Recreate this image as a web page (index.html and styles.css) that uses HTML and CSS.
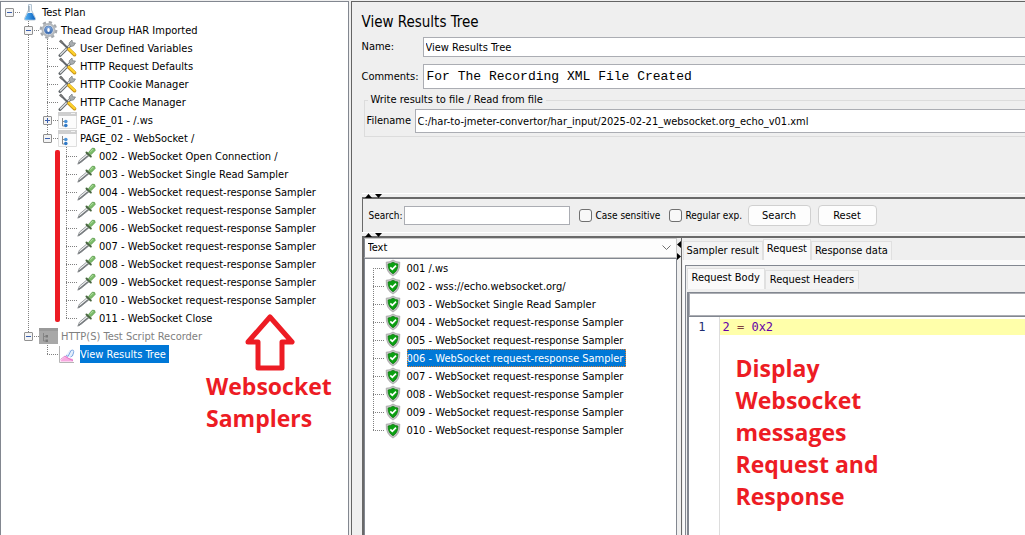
FILE: index.html
```html
<!DOCTYPE html>
<html lang="en">
<head>
<meta charset="utf-8">
<title>View Results Tree</title>
<link rel="stylesheet" href="styles.css">
</head>
<body>
<svg class="defs" aria-hidden="true">
  <defs>
    <linearGradient id="blue" x1="0" y1="0" x2="0" y2="1"><stop offset="0" stop-color="#8db4e8"/><stop offset="1" stop-color="#2c5ea8"/></linearGradient>
    <linearGradient id="water" x1="0" y1="0" x2="1" y2="0"><stop offset="0" stop-color="#58b4f4"/><stop offset="1" stop-color="#0a62c0"/></linearGradient>
    <symbol id="flask" viewBox="0 0 19 18">
      <path d="M8.300 1.500h3.400M8.500 2v5L4.500 15.500q-.5 1.500 1 1.500h9q1.500 0 1-1.500L11.500 7V2" fill="#eef5fb" stroke="#b4c4d2"/>
      <path d="M7.800 10h4.400l3 5.800q0 1-1 1H5.800q-1 0-1-1z" fill="url(#water)"/>
      <path d="M9 3v6" stroke="#7b8c9b"/>
    </symbol>
    <symbol id="gear" viewBox="0 0 19 18">
      <circle cx="9.500" cy="9" r="7.700" fill="none" stroke="#a3a7ac" stroke-width="2.400" stroke-dasharray="3.200 2.850"/>
      <circle cx="9.500" cy="9" r="6" fill="#e6e8ea" stroke="#b4b8bc" stroke-width="2"/>
      <circle cx="9.500" cy="9" r="4" fill="url(#blue)" stroke="#5f86bd"/>
      <ellipse cx="9.500" cy="9" rx="1.300" ry="2" fill="#fff"/>
    </symbol>
    <symbol id="tools" viewBox="0 0 19 18">
      <path d="M2 16.500L13 5.500" stroke="#62676b" stroke-width="3" stroke-linecap="round"/>
      <path d="M2.500 15.800L13 5.300" stroke="#dfe2e3" stroke-width="1.300" stroke-linecap="round"/>
      <path d="M12.500 7.500L11 4l3-3 .5 2.700L17.500 4l-2 3z" fill="#a8adb0" stroke="#777c80" stroke-width=".7"/>
      <path d="M2 1.500L10 9.500" stroke="#62676b" stroke-width="2"/><path d="M1 2.500L3 .8l2.500 2.500-2 1.500z" fill="#777"/>
      <path d="M11 10.500L16.500 15.700" stroke="#c9951a" stroke-width="3.600" stroke-linecap="round"/>
      <path d="M11 10L16.500 15.200" stroke="#ffd32c" stroke-width="2.200" stroke-linecap="round"/>
    </symbol>
    <symbol id="controller" viewBox="0 0 19 18">
      <path d="M.5 2.500h18v15H.5z" fill="#fcfcfc" stroke="#dedede"/><path d="M0 1h19v4H0z" fill="#cfcfcf"/>
      <path d="M13 2.500h4" stroke="#f2f2f2"/><path d="M4.500 7v8h2M4.500 10.500h2" fill="none" stroke="#8a8a8a"/>
      <circle cx="7.800" cy="10.500" r="1.800" fill="#4a93d9"/><circle cx="7.800" cy="14.500" r="1.800" fill="#2f79c7"/>
    </symbol>
    <symbol id="recorder" viewBox="0 0 19 18">
      <path d="M0 1h19v16H0z" fill="#a8a8a8"/><path d="M0 1h19v3H0z" fill="#9a9a9a"/>
      <path d="M4.500 6v8h2M4.500 9.500h2" fill="none" stroke="#858585"/><path d="M6.500 8h2.500v2.500H6.500zM6.500 12.500h2.500v2.500H6.500z" fill="#7a7a7a"/>
    </symbol>
    <symbol id="dropper" viewBox="0 0 19 18">
      <path d="M.8 17.200L2.500 13 10 6.800l2 2L4.500 15z" fill="#f0f1f2" stroke="#8e9295" stroke-width=".9"/>
      <path d="M1.500 16.500L4 14.500 11 8.800" fill="none" stroke="#6e7376" stroke-width="1.100"/>
      <path d="M9.500 5.500l4.300 4" stroke="#48663f" stroke-width="2" stroke-linecap="round"/>
      <path d="M11.500 5.500L15.200 1.200q3.300-.6 3 2.200L14 7.700z" fill="#7cbd6a" stroke="#5c9a4d" stroke-width=".7"/>
      <path d="M13.500 4.700L16.200 2" stroke="#b6e0a8"/>
    </symbol>
    <symbol id="chart" viewBox="0 0 19 18">
      <path d="M2.500 15.500L8 11l3 2 4 1v2.500H2.500z" fill="#f8a8e0"/><path d="M2.500 14.500L7 11l3.500 2.500L15 15.500" fill="none" stroke="#d86abf" stroke-width=".8"/>
      <path d="M8 10.500L11.500 5h4v6l-3.500 1.500z" fill="#e4effc"/><path d="M8 10l2 1.500L13 5.500q3.500-1.500 2.500 2.500t-3 4" fill="none" stroke="#7fa9e2"/>
      <path d="M1.500 1v16.500H16" fill="none" stroke="#b5b5b5"/>
    </symbol>
    <symbol id="shield" viewBox="0 0 16 18">
      <path d="M8 1.200Q11 3 14.600 3.500q.6 9-6.600 13.200Q.8 12.500 1.400 3.500 5 3 8 1.200z" fill="#ccc" stroke="#b4b4b4" stroke-width="1.300"/>
      <path d="M8 3.200Q10.500 4.700 12.900 5q.3 6.500-4.900 9.800Q2.800 11.500 3.100 5 5.500 4.700 8 3.200z" fill="#0ba012" stroke="#067009" stroke-width=".7"/>
      <path d="M5.300 8.400l2 2L11 6.700" fill="none" stroke="#fff" stroke-width="1.700"/>
    </symbol>
  </defs>
</svg>
<main class="window">
  <nav class="plan">
    <ul class="tree root">
      <li>
        <div class="row"><button class="toggle" aria-label="Collapse"></button><svg class="icon"><use href="#flask"/></svg><span class="label">Test Plan</span></div>
        <ul class="tree">
          <li>
            <div class="row"><button class="toggle" aria-label="Collapse"></button><svg class="icon"><use href="#gear"/></svg><span class="label">Thead Group HAR Imported</span></div>
            <ul class="tree">
              <li><div class="row"><svg class="icon"><use href="#tools"/></svg><span class="label">User Defined Variables</span></div></li>
              <li><div class="row"><svg class="icon"><use href="#tools"/></svg><span class="label">HTTP Request Defaults</span></div></li>
              <li><div class="row"><svg class="icon"><use href="#tools"/></svg><span class="label">HTTP Cookie Manager</span></div></li>
              <li><div class="row"><svg class="icon"><use href="#tools"/></svg><span class="label">HTTP Cache Manager</span></div></li>
              <li><div class="row"><button class="toggle closed" aria-label="Expand"></button><svg class="icon"><use href="#controller"/></svg><span class="label">PAGE_01 - /.ws</span></div></li>
              <li>
                <div class="row"><button class="toggle" aria-label="Collapse"></button><svg class="icon"><use href="#controller"/></svg><span class="label">PAGE_02 - WebSocket /</span></div>
                <ul class="tree">
                  <li><div class="row"><svg class="icon"><use href="#dropper"/></svg><span class="label">002 - WebSocket Open Connection /</span></div></li>
                  <li><div class="row"><svg class="icon"><use href="#dropper"/></svg><span class="label">003 - WebSocket Single Read Sampler</span></div></li>
                  <li><div class="row"><svg class="icon"><use href="#dropper"/></svg><span class="label">004 - WebSocket request-response Sampler</span></div></li>
                  <li><div class="row"><svg class="icon"><use href="#dropper"/></svg><span class="label">005 - WebSocket request-response Sampler</span></div></li>
                  <li><div class="row"><svg class="icon"><use href="#dropper"/></svg><span class="label">006 - WebSocket request-response Sampler</span></div></li>
                  <li><div class="row"><svg class="icon"><use href="#dropper"/></svg><span class="label">007 - WebSocket request-response Sampler</span></div></li>
                  <li><div class="row"><svg class="icon"><use href="#dropper"/></svg><span class="label">008 - WebSocket request-response Sampler</span></div></li>
                  <li><div class="row"><svg class="icon"><use href="#dropper"/></svg><span class="label">009 - WebSocket request-response Sampler</span></div></li>
                  <li><div class="row"><svg class="icon"><use href="#dropper"/></svg><span class="label">010 - WebSocket request-response Sampler</span></div></li>
                  <li><div class="row"><svg class="icon"><use href="#dropper"/></svg><span class="label">011 - WebSocket Close</span></div></li>
                </ul>
              </li>
            </ul>
          </li>
          <li>
            <div class="row"><button class="toggle" aria-label="Collapse"></button><svg class="icon"><use href="#recorder"/></svg><span class="label disabled">HTTP(S) Test Script Recorder</span></div>
            <ul class="tree">
              <li><div class="row"><svg class="icon"><use href="#chart"/></svg><span class="label selected">View Results Tree</span></div></li>
            </ul>
          </li>
        </ul>
      </li>
    </ul>
    <div class="marker"></div>
    <div class="note note-samplers">
      <svg class="arrow" viewBox="0 0 52 60"><path d="M26 4L48 29H38V55H14V29H4z" fill="#fff" stroke="#ed1c24" stroke-width="5" stroke-linejoin="round"/></svg>
      <p>Websocket<br>Samplers</p>
    </div>
  </nav>

  <section class="editor">
    <div class="head">
      <h1>View Results Tree</h1>
      <div class="field"><label for="name">Name:</label><input id="name" type="text" value="View Results Tree"></div>
      <div class="field comments"><label for="comments">Comments:</label><input id="comments" type="text" value="For The Recording XML File Created"></div>
      <fieldset>
        <legend>Write results to file / Read from file</legend>
        <label for="file">Filename</label><input id="file" type="text" value="C:/har-to-jmeter-convertor/har_input/2025-02-21_websocket.org_echo_v01.xml">
      </fieldset>
    </div>
    <div class="split"><svg class="grips" viewBox="0 0 20 4"><path d="M3 4l3.500-4L10 4zM13 0h7l-3.500 4z"/></svg></div>
    <form class="search">
      <label for="query">Search:</label><input id="query" type="text">
      <input id="case" type="checkbox"><label for="case">Case sensitive</label>
      <input id="regex" type="checkbox"><label for="regex">Regular exp.</label>
      <button type="button">Search</button><button type="button">Reset</button>
    </form>
    <div class="split"><svg class="grips" viewBox="0 0 20 4"><path d="M3 4l3.500-4L10 4zM13 0h7l-3.500 4z"/></svg></div>
    <div class="results">
      <div class="samples">
        <select aria-label="Renderer"><option>Text</option></select>
        <ul class="tree list">
          <li><div class="row"><svg class="icon"><use href="#shield"/></svg><span class="label">001 /.ws</span></div></li>
          <li><div class="row"><svg class="icon"><use href="#shield"/></svg><span class="label">002 - wss://echo.websocket.org/</span></div></li>
          <li><div class="row"><svg class="icon"><use href="#shield"/></svg><span class="label">003 - WebSocket Single Read Sampler</span></div></li>
          <li><div class="row"><svg class="icon"><use href="#shield"/></svg><span class="label">004 - WebSocket request-response Sampler</span></div></li>
          <li><div class="row"><svg class="icon"><use href="#shield"/></svg><span class="label">005 - WebSocket request-response Sampler</span></div></li>
          <li><div class="row"><svg class="icon"><use href="#shield"/></svg><span class="label selected focused">006 - WebSocket request-response Sampler</span></div></li>
          <li><div class="row"><svg class="icon"><use href="#shield"/></svg><span class="label">007 - WebSocket request-response Sampler</span></div></li>
          <li><div class="row"><svg class="icon"><use href="#shield"/></svg><span class="label">008 - WebSocket request-response Sampler</span></div></li>
          <li><div class="row"><svg class="icon"><use href="#shield"/></svg><span class="label">009 - WebSocket request-response Sampler</span></div></li>
          <li><div class="row"><svg class="icon"><use href="#shield"/></svg><span class="label">010 - WebSocket request-response Sampler</span></div></li>
        </ul>
      </div>
      <div class="vsplit"><svg viewBox="0 0 4 20"><path d="M4 0v7L0 3.500zM0 12v7l4-3.500z"/></svg></div>
      <div class="detail">
        <div class="tabs"><button>Sampler result</button><button class="active">Request</button><button>Response data</button></div>
        <div class="pane">
          <div class="tabs inner"><button class="active">Request Body</button><button>Request Headers</button></div>
          <div class="body">
            <input type="text" aria-label="Find in request body">
            <div class="code">
              <div class="gutter">1</div>
              <div class="source"><code>2 <span>=</span> 0x2</code>
                <p class="note note-messages">Display<br>Websocket<br>messages<br>Request and<br>Response</p>
              </div>
            </div>
          </div>
        </div>
      </div>
    </div>
  </section>
</main>
</body>
</html>
```
FILE: styles.css
```css
* { box-sizing: border-box; }
body { margin: 0; background: #efefef; color: #000; font: 11px/18px "DejaVu Sans Condensed", "Noto Sans", sans-serif; }
ul, p, h1, fieldset { margin: 0; padding: 0; }
button, input, select { font: inherit; color: inherit; margin: 0; border-radius: 0; }
.defs { position: absolute; width: 0; height: 0; }
.window { display: flex; gap: 2px; height: 100vh; min-height: 520px; padding-top: 1px; overflow: hidden; }

.plan { position: relative; flex: 0 0 34%; background: #fff; border: 1px solid #828790; border-bottom: 0; padding-top: 1px; }
.tree { list-style: none; margin-left: 19px; }
.tree.root { margin-left: -1px; }
.tree li { background: repeating-linear-gradient(#808080 0 1px, transparent 1px 2px) 9px 0 / 1px 100% no-repeat; }
.tree li:last-child { background-size: 1px 10px; }
.tree.root > li { background: none; }
.row { display: flex; align-items: center; height: 18px; padding-left: 20px; background: repeating-linear-gradient(90deg, #808080 0 1px, transparent 1px 2px) 9px 9px / 11px 1px no-repeat; }
.row:has(.toggle) { padding-left: 5px; }
.toggle { width: 9px; height: 9px; padding: 0; margin-right: 6px; border: 1px solid #919191; border-radius: 1px; background: linear-gradient(#3a5fae, #3a5fae) center / 5px 1px no-repeat, #f4f4f4; }
.toggle.closed { background: linear-gradient(#3a5fae, #3a5fae) center / 5px 1px no-repeat, linear-gradient(#3a5fae, #3a5fae) center / 1px 5px no-repeat, #f4f4f4; }
.icon { flex: none; width: 19px; height: 18px; margin-right: 3px; }
.label { padding: 2px 3px 0 0; line-height: 16px; white-space: nowrap; }
.disabled { color: #808080; }
.selected { background: #0078d7; color: #fff; }
.focused { outline: 1px dotted #e08030; outline-offset: -1px; }

.note { color: #ed1c24; font: bold 23px/32px "Open Sans", "Noto Sans", sans-serif; }
.marker { position: absolute; left: 54px; top: 148px; width: 5px; height: 172px; border-radius: 2px; background: #ed1c24; }
.note-samplers { position: absolute; left: 205px; top: 311px; }
.arrow { display: block; width: 52px; height: 60px; margin: 0 0 -3px 38px; }

.editor { flex: 1; min-width: 0; display: flex; flex-direction: column; border: solid #646464; border-width: 1px 0 0 1px; padding-left: 10px; }
.head { flex: none; height: 191px; padding-top: 11px; }
h1 { font: 15px/18px "DejaVu Sans Condensed", "Noto Sans", sans-serif; margin-bottom: 6px; }
.field { display: flex; align-items: center; height: 20px; margin-bottom: 7px; }
.field.comments { height: 25px; margin-bottom: 2px; }
.field label { width: 61px; }
input[type="text"] { flex: 1; min-width: 0; height: 100%; padding: 0 2px; border: 1px solid #abadb3; background: #fff; outline: 0; }
.field input { border-right: 0; }
#comments { padding-left: 3px; font: 13px/18px "Liberation Mono", monospace; }
fieldset { display: flex; align-items: center; margin-left: 2px; border: 1px solid #dcdcdc; border-right: 0; padding: 0 0 3px 2px; min-width: 0; }
legend { padding: 0 3px; margin-left: 1px; line-height: 18px; }
fieldset label { width: 48px; }
fieldset input[type="text"] { height: 24px; border-right: 0; }

.split { flex: none; height: 6px; border-top: 1px solid #fff; border-bottom: 2px solid #696969; }
.grips { display: block; width: 20px; height: 4px; }
.search { flex: none; display: flex; align-items: center; height: 33px; margin: 0; padding-left: 6px; border-left: 1px solid #696969; font-size: 10px; }
.search label { white-space: nowrap; }
.search label[for="query"] { width: 35px; }
#query { flex: 0 0 166px; height: 19px; margin-right: 9px; }
input[type="checkbox"] { appearance: none; flex: none; width: 13px; height: 13px; margin-right: 4px; border: 1px solid #707070; border-radius: 3px; background: #f8f8f8; }
label[for="case"] { width: 73px; }
label[for="regex"] { width: 62px; }
.search button { width: 63px; height: 21px; padding: 0; margin-right: 7px; border: 1px solid #d0d0d0; border-radius: 4px; background: #fdfdfd; font-size: 11px; }
.search button:last-child { width: 59px; }

.results { flex: 1; min-height: 0; display: flex; border-left: 2px solid #696969; }
.samples { flex: 0 0 313px; display: flex; flex-direction: column; }
select { appearance: none; height: 20px; padding: 0 3px; border: 1px solid #c8c8c8; border-left-color: #828790; background: #fdfdfd url("data:image/svg+xml,%3Csvg xmlns='http://www.w3.org/2000/svg' width='9' height='6'%3E%3Cpath d='M.5.5l4 4 4-4' fill='none' stroke='%23707070'/%3E%3C/svg%3E") right 5px center no-repeat; outline: 0; }
.list { flex: 1; margin: 0; border: 1px solid #828790; border-bottom: 0; background: #fff; }
.list li { background-position-x: 8px; }
.list li:first-child { background-position-y: 9px; }
.list .row { background-position-x: 8px; }
.list .icon { width: 16px; margin-right: 6px; }
.vsplit { flex: 0 0 5px; border-right: 1px solid #696969; }
.vsplit svg { display: block; width: 4px; height: 20px; margin-top: 3px; }
.detail { flex: 1; min-width: 0; display: flex; flex-direction: column; padding: 1px 0 0 1px; }
.tabs { flex: none; display: flex; align-items: flex-end; height: 21px; }
.tabs button { height: 19px; padding: 0 3px; border: 1px solid #e0e0e0; border-bottom: 0; background: #f3f3f3; white-space: nowrap; }
.tabs .active { height: 21px; padding-bottom: 2px; background: #fafafa; }
.pane { flex: 1; display: flex; flex-direction: column; border: solid #fafafa; border-width: 5px 0 0 2px; box-shadow: inset 1px 1px #828790; padding: 3px 0 0 2px; }
.inner button { padding: 0 4px; }
.body { flex: 1; display: flex; flex-direction: column; margin-top: 3px; border: solid #828790; border-width: 1px 0 0 2px; background: #fff; }
.body input[type="text"] { flex: 0 0 23px; border-right: 0; }
.code { flex: 1; display: flex; border-top: 1px solid #828790; padding-top: 2px; font: 12px/16px "DejaVu Sans Mono", monospace; }
.gutter { flex: 0 0 31px; padding-right: 13px; margin-top: -2px; padding-top: 2px; border-right: 1px solid #ddd; text-align: right; color: #1c2c70; }
.source { flex: 1; }
.source code { display: block; padding-left: 3px; background: #ffffaa; color: #6400a8; font: inherit; }
.source code span { color: #804040; }
.note-messages { margin: 17px 0 0 16px; }
```
